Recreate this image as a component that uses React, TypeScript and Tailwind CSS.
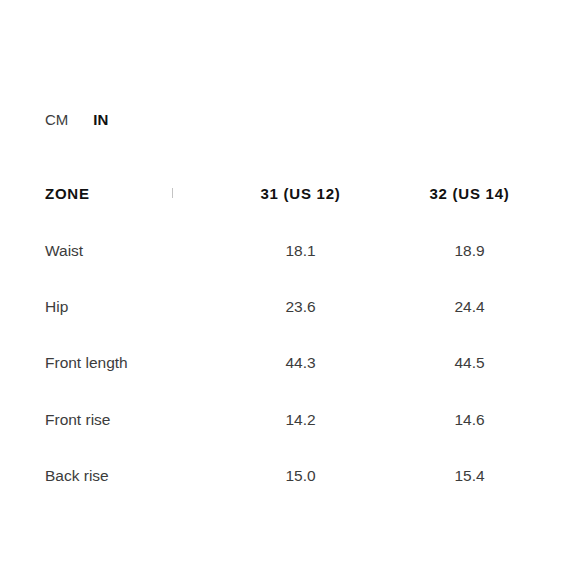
const rows = [
  { zone: "Waist", a: "18.1", b: "18.9" },
  { zone: "Hip", a: "23.6", b: "24.4" },
  { zone: "Front length", a: "44.3", b: "44.5" },
  { zone: "Front rise", a: "14.2", b: "14.6" },
  { zone: "Back rise", a: "15.0", b: "15.4" },
];

export default function App() {
  return (
    <main
      className="w-[580px] h-[580px] bg-white overflow-hidden"
      style={{ fontFamily: '"Liberation Sans", Arial, sans-serif' }}
    >
      <div className="px-[45px] pt-[110px]">
        {/* Unit toggle */}
        <div className="flex items-center gap-[25px] h-[20px] text-[15px] leading-[20px]">
          <button className="text-[#3c3c3c]">CM</button>
          <button className="font-bold text-[#111]">IN</button>
        </div>

        {/* Table */}
        <div className="mt-[36px]">
          <div className="grid grid-cols-[171px_169px_169px] h-[56.25px] items-center text-[15px] font-bold tracking-[0.05em] text-[#111]">
            <div className="relative">
              ZONE
              <span className="absolute left-[127px] top-[5px] w-px h-[10px] bg-[#c4c4c4]" />
            </div>
            <div className="text-center">31 (US 12)</div>
            <div className="text-center">32 (US 14)</div>
          </div>
          {rows.map((r) => (
            <div
              key={r.zone}
              className="grid grid-cols-[171px_169px_169px] h-[56.25px] items-center text-[15.5px] text-[#3c3c3c]"
            >
              <div>{r.zone}</div>
              <div className="text-center">{r.a}</div>
              <div className="text-center">{r.b}</div>
            </div>
          ))}
        </div>
      </div>
    </main>
  );
}
